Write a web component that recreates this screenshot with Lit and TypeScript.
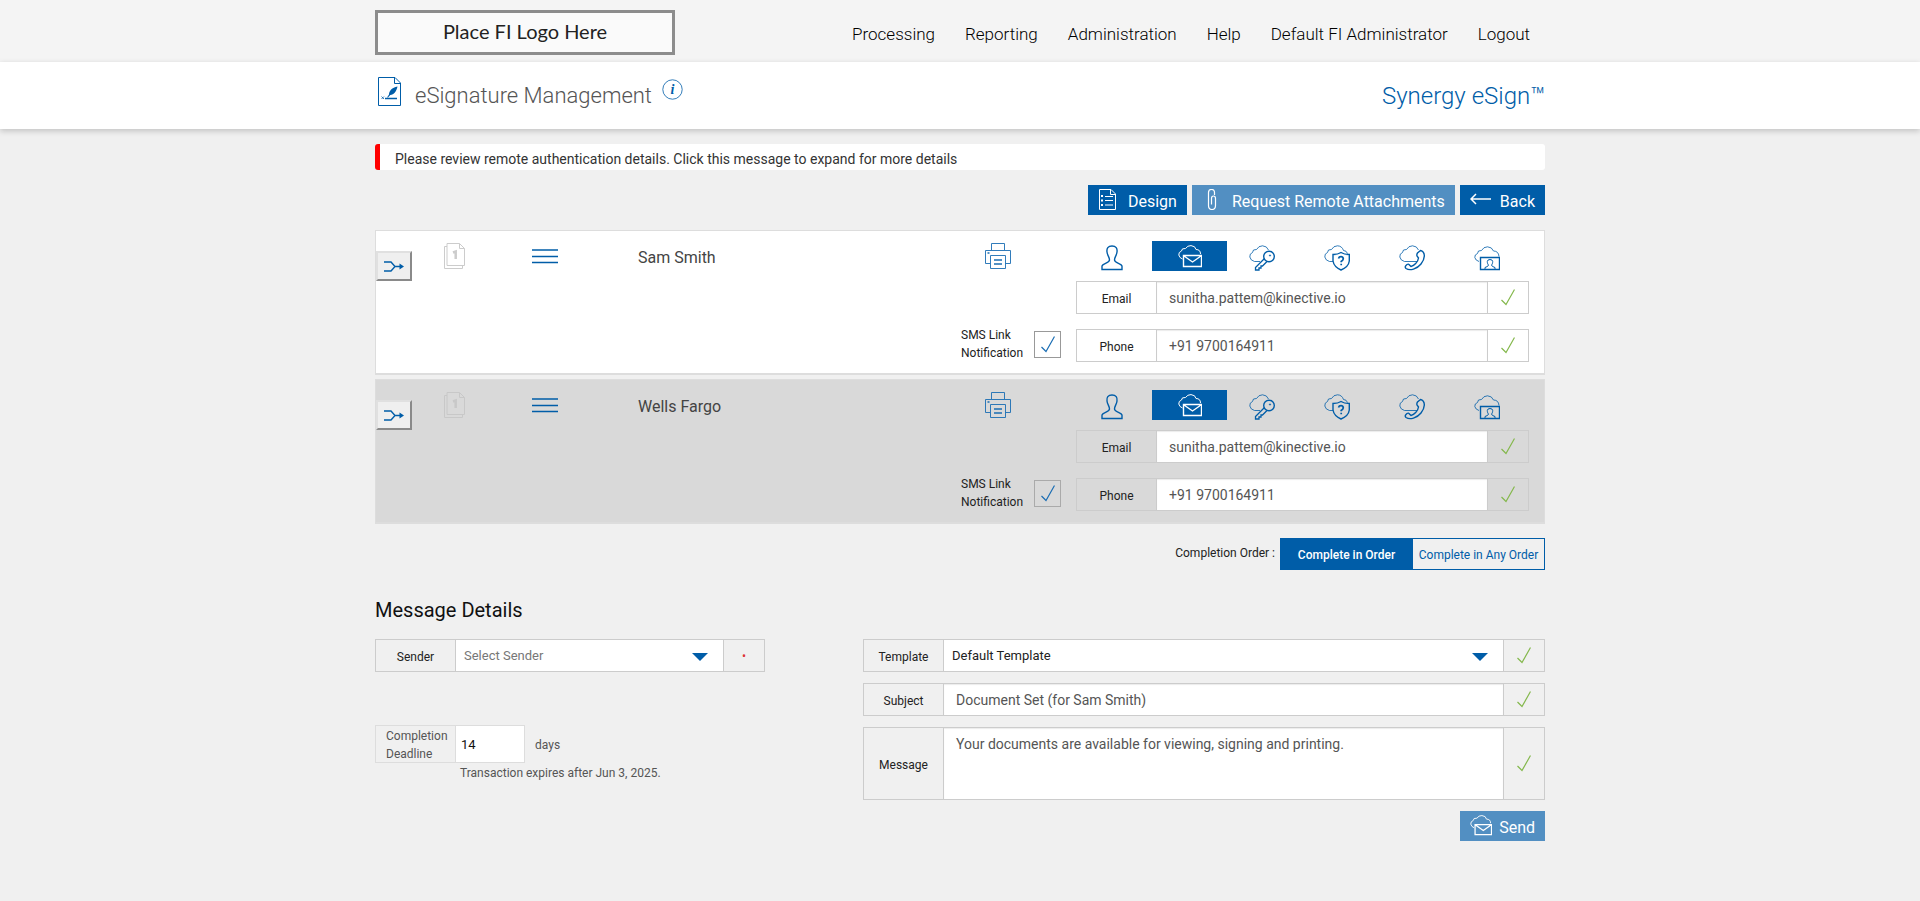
import { LitElement, html, svg, css, nothing } from "lit";
import { customElement, property, state } from "lit/decorators.js";
import { classMap } from "lit/directives/class-map.js";

const shapes = {
  design: svg`<path d="M1.500 .5H13L17.500 5V20.500H1.500ZM12.500 .5V5.500H17.500"/><path stroke-width="2" d="M3 7h2M3 11.500h2M3 16h2"/><path d="M7 7.500h8M7 11.500h8M7 16h8"/>`,
  clip: svg`<path stroke-width="1.200" d="M7.500 6V3.500Q7.500 .5 4.500 .5T1.500 3.500V16.500Q1.500 20.500 5 20.500T8.500 16.500V9.500Q8.500 7 6.500 7T4.500 9.500V15.500"/>`,
  back: svg`<path stroke-width="1.500" d="M1 6H21M6 1L1 6L6 11"/>`,
  merge: svg`<path stroke-width="1.400" d="M0 1H7L11 5.500L7 10H0M11 5.500H17"/><path fill="currentColor" stroke="none" d="M15.500 2.500L20 5.500L15.500 8.500Z"/>`,
  pages: svg`<path d="M3 3.500H.5V25.500H18.500V22.500"/><path d="M3 .5H15.500L20.500 5.500V22.500H3ZM15.500 .5V5.500H20.500"/><path stroke-width="2.500" d="M9 9.500L11.700 8.500V16"/>`,
  burger: svg`<path stroke-width="1.500" d="M0 1H26M0 7.500H26M0 13.500H26"/>`,
  printer: svg`<path stroke-width=".9" d="M6.500 7V.5H19.500V7M5 20.500H.5V7.500H25.500V20.500H20.500M5.500 12.500H20.500V25.500H5.500Z"/><path stroke-width="1.500" d="M9 17H17M9 21H17M2.500 10h2"/>`,
  person: svg`<path stroke-width="1.400" d="M11 1C7 1 5.500 3.500 6 7C6.300 10.500 8.500 12 8.500 15C8.500 18 1.500 18.500 1 21V24.500H21V21C20.500 18.500 13.500 18 13.500 15C13.500 12 15.700 10.500 16 7C16.500 3.500 15 1 11 1Z"/>`,
  mail: svg`<path d="M4.500 14Q1.500 13 .8 10Q.5 7 3.500 6Q3.500 3 7.500 3.500Q9.500 .5 13 .6Q17.500 1 18 4.500Q22.500 4.500 22.500 9"/><path stroke-width="1.400" d="M5.500 10.500H23.500V21.500H5.500ZM6 11L14.500 17L23 11"/>`,
  key: svg`<path stroke-width=".8" d="M11 16.500H5.500Q1.500 15.500 .8 12Q.5 8.500 3.500 7.500Q3.500 4 7.500 4.500Q9.500 .8 13.500 .8Q18 1 19.500 5"/><circle stroke-width="1.400" cx="20" cy="11.500" r="5.300"/><circle cx="21" cy="10.500" r=".6"/><path stroke-width="1.300" d="M15.500 13.500L6.500 22.500V25H10V23H12V21H13.500L18 16.500"/>`,
  shield: svg`<path stroke-width=".8" d="M9 16.500H5.500Q1.500 15.500 .8 12Q.5 8.500 3.500 7.500Q3.500 4 7.500 4.500Q9.500 .8 13.500 .8Q18 1 19.500 5.500Q22.500 5.500 23.500 8.500"/><path stroke-width="1.400" d="M17 7.500Q14 9.500 9 9.500V16Q10 22 17 25Q24.500 22 25.300 16V9.500Q20 9.500 17 7.500Z"/><path stroke-width="1.700" d="M14.500 13.500Q15 11.700 17 11.700T19.300 13.800Q19.300 15 17.200 16.500V17.300M17.200 18.800V20.300"/>`,
  phone: svg`<path stroke-width=".8" d="M18 16.500H5.500Q1.500 15.500 .8 12Q.5 8.500 3.500 7.500Q3.500 4 7.500 4.500Q9.500 .8 13.500 .8Q18 1 19.500 5"/><path stroke-width="1.400" d="M21.500 5.500C27 7 26 14 22 19C18 24 11 26 7 23.500Q5.500 22 7 20.500L8 19.500Q9.500 18.500 10.500 20L12 21.500C15 21 19 17 19.500 13L18 11Q17.500 9.500 18.500 8Z"/>`,
  video: svg`<path stroke-width=".8" d="M5 16.500Q1.500 15.500 .8 12.500Q.5 9.500 3.500 8.500Q3.500 5 7.500 5.500Q9.500 1.800 13.500 1.800Q18 2 19.500 6Q24.500 6 25 11.500"/><path stroke-width="1.400" d="M6.500 12.500H25.500V24.500H6.500Z"/><path d="M11 24V22.500Q14.500 21.500 14.500 20C13.500 19 13.300 17.500 13.300 16.500Q13.500 14.500 16 14.500T18.700 16.500C18.700 17.500 18.500 19 17.500 20Q17.500 21.500 21 22.500V24"/>`,
  check: svg`<path stroke-width="1.200" d="M.5 11L5 15.500L13.500 .5"/>`,
  caret: svg`<path fill="currentColor" stroke="none" d="M0 0H16L8 8Z"/>`,
  sign: svg`<path d="M.5 .5H17L22.500 6V28.500H.5ZM16.500 .5V6.500H22.500"/><path stroke-width=".8" d="M3.500 19.500l2.500 2.500M6 19.500l-2.500 2.500"/><path stroke-width="1.500" d="M7 21.500H19"/><path fill="currentColor" stroke="none" d="M19.500 9.500C14 10.500 11 14 11 17.500L9 20.500H10L12.300 18C16 17.500 18.500 14.500 19.500 9.500Z"/>`,
  info: svg`<circle stroke-width=".8" cx="10.500" cy="10.500" r="9.700"/>`,
};
type IconName = keyof typeof shapes;

const icon = (name: IconName, w: number, h: number, vw = w, vh = h) =>
  html`<svg class="icon" width=${w} height=${h} viewBox="0 0 ${vw} ${vh}" aria-hidden="true">${shapes[name]}</svg>`;

const base = css`
  * { box-sizing: border-box; }
  .icon { display: block; fill: none; stroke: currentColor; stroke-width: 1; flex: none; }
  button, input, select, textarea { font: inherit; color: inherit; margin: 0; border: 0; border-radius: 0; }
  button { cursor: pointer; }
  .field { display: flex; border: 1px solid #ccc; min-height: 33px; }
  .field > label { flex: 0 0 80px; display: flex; align-items: center; justify-content: center; padding-top: 2px; font-size: 12px; color: #222; border-right: 1px solid #ccc; }
  .field > input, .field > textarea { flex: 1; min-width: 0; padding: 1px 12px 0; font-size: 14px; color: #555; background: #fff; outline: none; box-shadow: inset 0 1px 1px rgba(0, 0, 0, 0.08); }
  .status { flex: 0 0 41px; display: grid; place-items: center; border-left: 1px solid #ccc; color: #84b84c; }
`;

const methods: { name: IconName; label: string; w: number; h: number }[] = [
  { name: "person", label: "In person", w: 22, h: 26 },
  { name: "mail", label: "Email", w: 24, h: 23 },
  { name: "key", label: "Access code", w: 26, h: 26 },
  { name: "shield", label: "Security question", w: 26, h: 26 },
  { name: "phone", label: "Phone", w: 26, h: 26 },
  { name: "video", label: "Photo ID", w: 26, h: 26 },
];

@customElement("signer-card")
class SignerCard extends LitElement {
  @property() name = "";
  @property() email = "";
  @property() phone = "";
  @property({ type: Boolean, reflect: true }) muted = false;
  @state() method: IconName = "mail";

  static styles = [
    base,
    css`
      :host { display: block; }
      .card { display: grid; grid-template-columns: 68px 88px 106px minmax(120px, 1fr) 100px minmax(0, 468px); background: #fff; border: 1px solid #ddd; border-bottom-width: 2px; padding-right: 15px; }
      .merge { width: 36px; height: 30px; margin-top: 20px; padding: 0; display: grid; place-items: center; background: #efefef; border: 2px solid; border-color: #e0e0e0 #8a8a8a #8a8a8a #e0e0e0; color: #005da8; }
      .pages { padding-top: 12px; color: #ccc; }
      .burger { padding: 18px 0 0; background: none; color: #005da8; justify-self: start; align-self: start; }
      .name { padding-top: 17px; font-size: 16px; line-height: 20px; color: #444; }
      .left { display: flex; flex-direction: column; justify-content: space-between; padding: 12px 0 11px; }
      .print { padding: 0 0 0 24px; background: none; color: #1a6db3; align-self: flex-start; }
      .sms { display: flex; align-items: center; justify-content: space-between; font-size: 12px; line-height: 18px; color: #222; }
      .tick { display: grid; place-items: center; color: #1a6db3; }
      .tick > * { grid-area: 1 / 1; }
      .tick input { appearance: none; width: 27px; height: 27px; border: 1px solid #999; background: transparent; }
      .tick .icon { pointer-events: none; }
      .right { padding: 10px 0 11px; margin-left: 15px; display: grid; row-gap: 15px; }
      .tabs { display: grid; grid-template-columns: repeat(6, 1fr); padding: 0 1px; height: 30px; margin-bottom: -5px; }
      .tab { padding: 0; display: grid; place-items: center; background: none; color: #005da8; }
      .tab:not(.active) { padding-top: 4px; padding-right: 6px; }
      .active { background: #005da8; color: #fff; }
      .muted { background: #d9d9d9; }
      .muted .pages { color: #c8c8c8; }
      .muted .tick input { border-color: #aaa; }
    `,
  ];

  row(id: string, label: string, type: string, value: string) {
    return html`<div class="field">
      <label for=${id}>${label}</label>
      <input id=${id} type=${type} .value=${value} />
      <span class="status">${icon("check", 14, 17)}</span>
    </div>`;
  }

  render() {
    return html`<section class=${classMap({ card: true, muted: this.muted })}>
      <div><button class="merge" aria-label="Merge signer">${icon("merge", 20, 11)}</button></div>
      <div class="pages">${icon("pages", 21, 26)}</div>
      <button class="burger" aria-label="Reorder">${icon("burger", 26, 15)}</button>
      <div class="name">${this.name}</div>
      <div class="left">
        <button class="print" aria-label="Print">${icon("printer", 26, 26)}</button>
        <div class="sms">
          <label for="sms">SMS Link<br />Notification</label>
          <span class="tick"><input id="sms" type="checkbox" checked />${icon("check", 14, 17)}</span>
        </div>
      </div>
      <div class="right">
        <div class="tabs">
          ${methods.map(
            (m) => html`<button class=${classMap({ tab: true, active: m.name === this.method })} aria-label=${m.label} @click=${() => (this.method = m.name)}>
              ${icon(m.name, m.w, m.h)}
            </button>`
          )}
        </div>
        ${this.row("email", "Email", "email", this.email)} ${this.row("phone", "Phone", "tel", this.phone)}
      </div>
    </section>`;
  }
}

@customElement("app-root")
class AppRoot extends LitElement {
  @state() ordered = true;

  static styles = [
    base,
    css`
      :host { display: block; min-height: 100vh; background: #f0f0f0; font-family: Roboto, "Liberation Sans", sans-serif; font-size: 14px; color: #222; }
      .wrap { width: 100%; max-width: 1170px; margin: 0 auto; }
      .top { background: #f4f4f4; }
      .top .wrap { display: flex; justify-content: space-between; align-items: center; height: 62px; padding: 0 15px 0 0; }
      .logo { width: 300px; height: 45px; margin-top: 3px; border: 3px solid #8c8c8c; background: #fafafa; display: grid; place-items: center; padding-bottom: 3px; font-family: Lato, sans-serif; font-size: 20px; line-height: 24px; color: #222; }
      nav { display: flex; gap: 30px; padding-top: 5px; }
      nav a { color: #000; text-decoration: none; font-weight: 300; font-size: 17px; line-height: 20px; }
      .bar { background: #fff; box-shadow: 0 2px 6px rgba(0, 0, 0, 0.2); }
      .bar .wrap { display: flex; justify-content: space-between; height: 67px; padding: 15px 0 0 3px; }
      .title { display: flex; align-items: flex-start; color: #005da8; }
      h1 { margin: 5px 10px 0 14px; font-size: 22px; line-height: 28px; font-weight: 300; color: #555; }
      .info { display: grid; place-items: center; padding: 0; background: none; margin-top: 2px; }
      .info > * { grid-area: 1 / 1; }
      .i { font-family: "Liberation Serif", serif; font-style: italic; font-weight: bold; font-size: 14px; line-height: 16px; }
      .product { margin-top: 5px; font-size: 24px; line-height: 28px; font-weight: 300; color: #005da8; }
      .alert { display: block; width: 100%; height: 26px; margin: 15px 0; padding: 4px 15px 0; text-align: left; background: #fff; border-left: 5px solid #f00; border-radius: 3px; font-size: 14px; line-height: 20px; color: #333; }
      .actions { display: flex; justify-content: flex-end; gap: 5px; margin-bottom: 15px; }
      .btn { display: flex; align-items: flex-start; height: 30px; padding: 4px 10px 0; background: #005da8; color: #fff; font-size: 16px; line-height: 26px; }
      .btn .icon { margin-right: 11px; }
      .soft { background: #528fc2; }
      .clip .icon { margin: 0 15px 0 5px; }
      .arrow .icon { margin: 4px 8px 0 0; }
      .send .icon { margin-right: 7px; }
      .cards { display: grid; row-gap: 4px; }
      .order { display: flex; justify-content: flex-end; margin: 14px 0 28px; font-size: 12px; }
      .order > span { padding: 7px 6px 0 0; line-height: 16px; }
      .order button { width: 133px; height: 32px; margin-left: -1px; padding: 2px 0 0; border: 1px solid #005da8; background: #f0f0f0; color: #005da8; white-space: nowrap; }
      .order .on { background: #005da8; color: #fff; font-weight: 500; }
      h2 { margin: 0 0 17px; font-size: 20px; line-height: 24px; font-weight: 400; color: #111; }
      .details { display: grid; grid-template-columns: minmax(0, 390px) minmax(0, 682px); justify-content: space-between; }
      .select { flex: 1; display: grid; align-items: center; background: #fff; color: #005da8; }
      .select > * { grid-area: 1 / 1; }
      .select select { width: 100%; height: 31px; padding: 0 8px; appearance: none; background: transparent; font-size: 13px; color: #222; outline: none; }
      .select .empty { color: #777; }
      .select .icon { justify-self: end; margin: 3px 15px 0 0; pointer-events: none; }
      .req { color: #d33; font-size: 12px; line-height: 12px; }
      .deadline { display: flex; align-items: center; margin-top: 53px; font-size: 12px; line-height: 18px; color: #555; }
      .deadline label { width: 81px; height: 38px; padding: 1px 0 0 10px; border: 1px solid #ddd; }
      .deadline input { width: 69px; height: 38px; padding: 0 5px; border: 1px solid #ddd; border-left: 0; background: #fff; font-size: 13px; color: #111; outline: none; }
      .deadline span { padding: 1px 0 0 10px; }
      .expires { margin: 1px 0 0 85px; font-size: 12px; line-height: 18px; color: #555; }
      .form { display: grid; row-gap: 11px; }
      .field textarea { height: 71px; padding: 8px 12px; line-height: 16px; resize: none; font-family: inherit; }
      .foot { display: flex; justify-content: flex-end; }
    `,
  ];

  render() {
    const nav = ["Processing", "Reporting", "Administration", "Help", "Default FI Administrator", "Logout"];
    const ok = html`<span class="status">${icon("check", 14, 17)}</span>`;
    const toggle = (on: boolean, text: string) =>
      html`<button class=${this.ordered === on ? "on" : nothing} aria-pressed=${this.ordered === on} @click=${() => (this.ordered = on)}>${text}</button>`;
    return html`
      <header class="top">
        <div class="wrap">
          <div class="logo">Place FI Logo Here</div>
          <nav>${nav.map((n) => html`<a href="#">${n}</a>`)}</nav>
        </div>
      </header>
      <div class="bar">
        <div class="wrap">
          <div class="title">
            ${icon("sign", 23, 29)}
            <h1>eSignature Management</h1>
            <button class="info" aria-label="Information">${icon("info", 21, 21)}<span class="i">i</span></button>
          </div>
          <div class="product">Synergy eSign™</div>
        </div>
      </div>
      <main class="wrap">
        <button class="alert">Please review remote authentication details. Click this message to expand for more details</button>
        <div class="actions">
          <button class="btn">${icon("design", 19, 21)}Design</button>
          <button class="btn soft clip">${icon("clip", 10, 21)}Request Remote Attachments</button>
          <button class="btn arrow">${icon("back", 22, 12)}Back</button>
        </div>
        <div class="cards">
          <signer-card name="Sam Smith" email="sunitha.pattem@kinective.io" phone="+91 9700164911"></signer-card>
          <signer-card muted name="Wells Fargo" email="sunitha.pattem@kinective.io" phone="+91 9700164911"></signer-card>
        </div>
        <div class="order"><span>Completion Order :</span>${toggle(true, "Complete in Order")}${toggle(false, "Complete in Any Order")}</div>
        <h2>Message Details</h2>
        <div class="details">
          <div>
            <div class="field">
              <label for="sender">Sender</label>
              <span class="select"><select id="sender" class="empty"><option>Select Sender</option></select>${icon("caret", 16, 8)}</span>
              <span class="status"><span class="req">•</span></span>
            </div>
            <div class="deadline">
              <label for="days">Completion<br />Deadline</label>
              <input id="days" type="text" inputmode="numeric" value="14" />
              <span>days</span>
            </div>
            <div class="expires">Transaction expires after Jun 3, 2025.</div>
          </div>
          <div class="form">
            <div class="field">
              <label for="template">Template</label>
              <span class="select"><select id="template"><option>Default Template</option></select>${icon("caret", 16, 8)}</span>
              ${ok}
            </div>
            <div class="field"><label for="subject">Subject</label><input id="subject" type="text" value="Document Set (for Sam Smith)" />${ok}</div>
            <div class="field">
              <label for="message">Message</label>
              <textarea id="message" .value=${"Your documents are available for viewing, signing and printing."}></textarea>
              ${ok}
            </div>
            <div class="foot"><button class="btn soft send">${icon("mail", 22, 21, 24, 23)}Send</button></div>
          </div>
        </div>
      </main>
    `;
  }
}
